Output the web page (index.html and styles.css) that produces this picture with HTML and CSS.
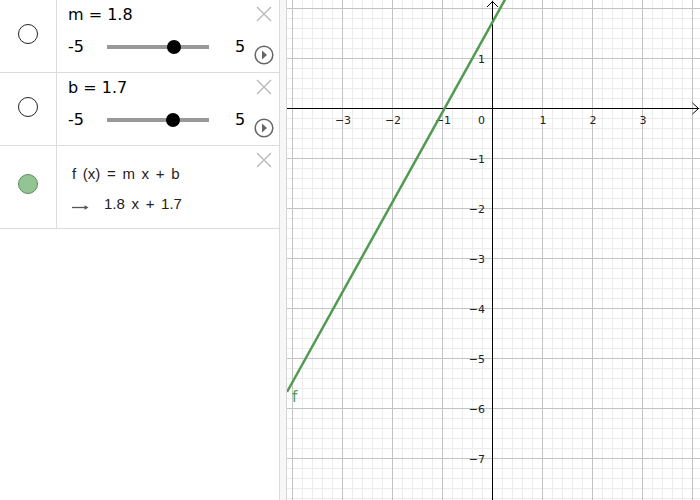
FILE: index.html
```html
<!DOCTYPE html>
<html>
<head>
<meta charset="utf-8">
<link rel="stylesheet" href="styles.css">
</head>
<body>
<div class="app">
  <div class="algebra">
    <div class="row">
      <div class="marker"><span class="dot"></span></div>
      <div class="content">
        <div class="main">
          <div class="title">m = 1.8</div>
          <div class="slider-row">
            <span class="min">-5</span>
            <div class="track"><span class="knob" style="--f:0.68"></span></div>
            <span class="max">5</span>
          </div>
        </div>
        <div class="side">
          <svg class="close" width="16" height="16" viewBox="0 0 16 16"><path d="M1 1L15 15M15 1L1 15"/></svg>
          <svg class="play" width="20" height="20" viewBox="0 0 20 20"><circle cx="10" cy="10" r="8.8"/><path d="M8 5.6L13 10L8 14.4Z"/></svg>
        </div>
      </div>
    </div>
    <div class="row">
      <div class="marker"><span class="dot"></span></div>
      <div class="content">
        <div class="main">
          <div class="title">b = 1.7</div>
          <div class="slider-row">
            <span class="min">-5</span>
            <div class="track"><span class="knob" style="--f:0.67"></span></div>
            <span class="max">5</span>
          </div>
        </div>
        <div class="side">
          <svg class="close" width="16" height="16" viewBox="0 0 16 16"><path d="M1 1L15 15M15 1L1 15"/></svg>
          <svg class="play" width="20" height="20" viewBox="0 0 20 20"><circle cx="10" cy="10" r="8.8"/><path d="M8 5.6L13 10L8 14.4Z"/></svg>
        </div>
      </div>
    </div>
    <div class="row row-func">
      <div class="marker"><span class="dot dot-green"></span></div>
      <div class="content">
        <div class="main formula">
          <div class="f-def">f (x) = m x + b</div>
          <div class="f-val">
            <svg class="arrow" width="17" height="7" viewBox="0 0 17 7"><path d="M0 3.5H15"/><path class="head" d="M12.5 1.2L16.5 3.5L12.5 5.8Z"/></svg>
            <span>1.8 x + 1.7</span>
          </div>
        </div>
        <div class="side">
          <svg class="close" width="16" height="16" viewBox="0 0 16 16"><path d="M1 1L15 15M15 1L1 15"/></svg>
        </div>
      </div>
    </div>
  </div>
  <div class="splitter"></div>
  <div class="graphics">
    <svg width="413" height="500" viewBox="0 0 413 500">
      <defs>
        <pattern id="minor" x="5" y="8" width="10" height="10" patternUnits="userSpaceOnUse">
          <path d="M0.5 0V10M0 0.5H10" stroke="#ececec" stroke-width="1" fill="none"/>
        </pattern>
        <pattern id="major" x="5" y="8" width="50" height="50" patternUnits="userSpaceOnUse">
          <path d="M0.5 0V50M0 0.5H50" stroke="#c3c3c3" stroke-width="1" fill="none"/>
        </pattern>
      </defs>
      <rect width="413" height="500" fill="#fff"/>
      <rect width="413" height="500" fill="url(#minor)"/>
      <rect width="413" height="500" fill="url(#major)"/>
      <g class="axes">
        <path d="M0 108.5H411.5"/>
        <path d="M405.5 103L411.5 108.5L405.5 114"/>
        <path d="M205.5 1V500"/>
        <path d="M200 7L205.5 1.5L211 7"/>
      </g>
      <g class="xlabels">
        <text x="56" y="124">−3</text>
        <text x="106" y="124">−2</text>
        <text x="156" y="124">−1</text>
        <text x="256" y="124">1</text>
        <text x="306" y="124">2</text>
        <text x="356" y="124">3</text>
      </g>
      <g class="ylabels">
        <text x="198" y="124">0</text>
        <text x="198" y="63">1</text>
        <text x="198" y="163">−1</text>
        <text x="198" y="213">−2</text>
        <text x="198" y="263">−3</text>
        <text x="198" y="313">−4</text>
        <text x="198" y="363">−5</text>
        <text x="198" y="413">−6</text>
        <text x="198" y="463">−7</text>
      </g>
      <line class="fline" x1="0" y1="392" x2="230" y2="-22"/>
      <text class="flabel" x="5" y="402">f</text>
    </svg>
  </div>
</div>
</body>
</html>
```
FILE: styles.css
```css
html, body {
  margin: 0;
  padding: 0;
  background: #fff;
}
body {
  width: 700px;
  height: 500px;
  overflow: hidden;
  font-family: "DejaVu Sans", sans-serif;
  color: #000;
}
.app {
  display: flex;
  width: 700px;
  height: 500px;
}
.algebra {
  width: 279px;
  border-right: 1px solid #dadada;
  display: flex;
  flex-direction: column;
  background: #fff;
}
.row {
  display: flex;
  height: 72px;
  border-bottom: 1px solid #dcdcdc;
}
.row-func {
  height: 82px;
}
.marker {
  width: 56px;
  border-right: 1px solid #dcdcdc;
  display: flex;
  justify-content: flex-start;
  align-items: flex-start;
}
.dot {
  box-sizing: border-box;
  width: 20px;
  height: 20px;
  margin: 24px 0 0 18px;
  border: 1px solid #222;
  border-radius: 50%;
  background: #fff;
}
.dot-green {
  margin-top: 28px;
  background: #93c493;
  border-color: #5f8f5f;
}
.content {
  flex: 1;
  display: flex;
  padding-left: 11px;
  padding-right: 5px;
}
.main {
  flex: 1;
  display: flex;
  flex-direction: column;
}
.title {
  font-size: 16px;
  line-height: 20px;
  padding-top: 5px;
}
.slider-row {
  display: flex;
  align-items: center;
  height: 20px;
  margin-top: 12px;
  font-size: 16px;
  line-height: 20px;
}
.min {
  width: 39px;
}
.track {
  position: relative;
  width: 102px;
  height: 4px;
  background: #999;
}
.knob {
  position: absolute;
  top: -5px;
  left: calc(var(--f) * (100% - 14px));
  width: 14px;
  height: 14px;
  border-radius: 50%;
  background: #000;
}
.max {
  margin-left: 26px;
}
.side {
  width: 20px;
  display: flex;
  flex-direction: column;
  justify-content: space-between;
  align-items: center;
  padding-top: 6px;
  padding-bottom: 7px;
}
.close path {
  stroke: #bdbdbd;
  stroke-width: 1.5;
  fill: none;
}
.play circle {
  fill: none;
  stroke: #666;
  stroke-width: 1.5;
}
.play path {
  fill: #666;
}
.formula {
  padding-left: 4px;
  font-family: "Liberation Sans", Arial, sans-serif;
  font-size: 15px;
  line-height: 20px;
  color: #222;
  word-spacing: 2.5px;
}
.f-def {
  padding-top: 18px;
}
.f-val {
  display: flex;
  align-items: center;
  margin-top: 10px;
}
.arrow {
  margin-right: 15px;
  margin-top: 6px;
}
.arrow path {
  stroke: #555;
  stroke-width: 1.3;
  fill: none;
}
.arrow path.head {
  fill: #555;
  stroke: none;
}
.splitter {
  width: 6px;
  background: #f7f7f7;
  border-right: 1px solid #d6d6d6;
}
.graphics {
  flex: 1;
  height: 500px;
  overflow: hidden;
}
.graphics svg {
  display: block;
}
.axes path {
  stroke: #000;
  stroke-width: 1;
  fill: none;
}
.xlabels text, .ylabels text {
  font-family: "DejaVu Sans", sans-serif;
  font-size: 11px;
  fill: #222;
}
.xlabels text {
  text-anchor: middle;
}
.ylabels text {
  text-anchor: end;
}
.fline {
  stroke: #519a51;
  stroke-width: 2.5;
}
.flabel {
  font-family: "DejaVu Sans", sans-serif;
  font-size: 15px;
  fill: #519a51;
}
```
